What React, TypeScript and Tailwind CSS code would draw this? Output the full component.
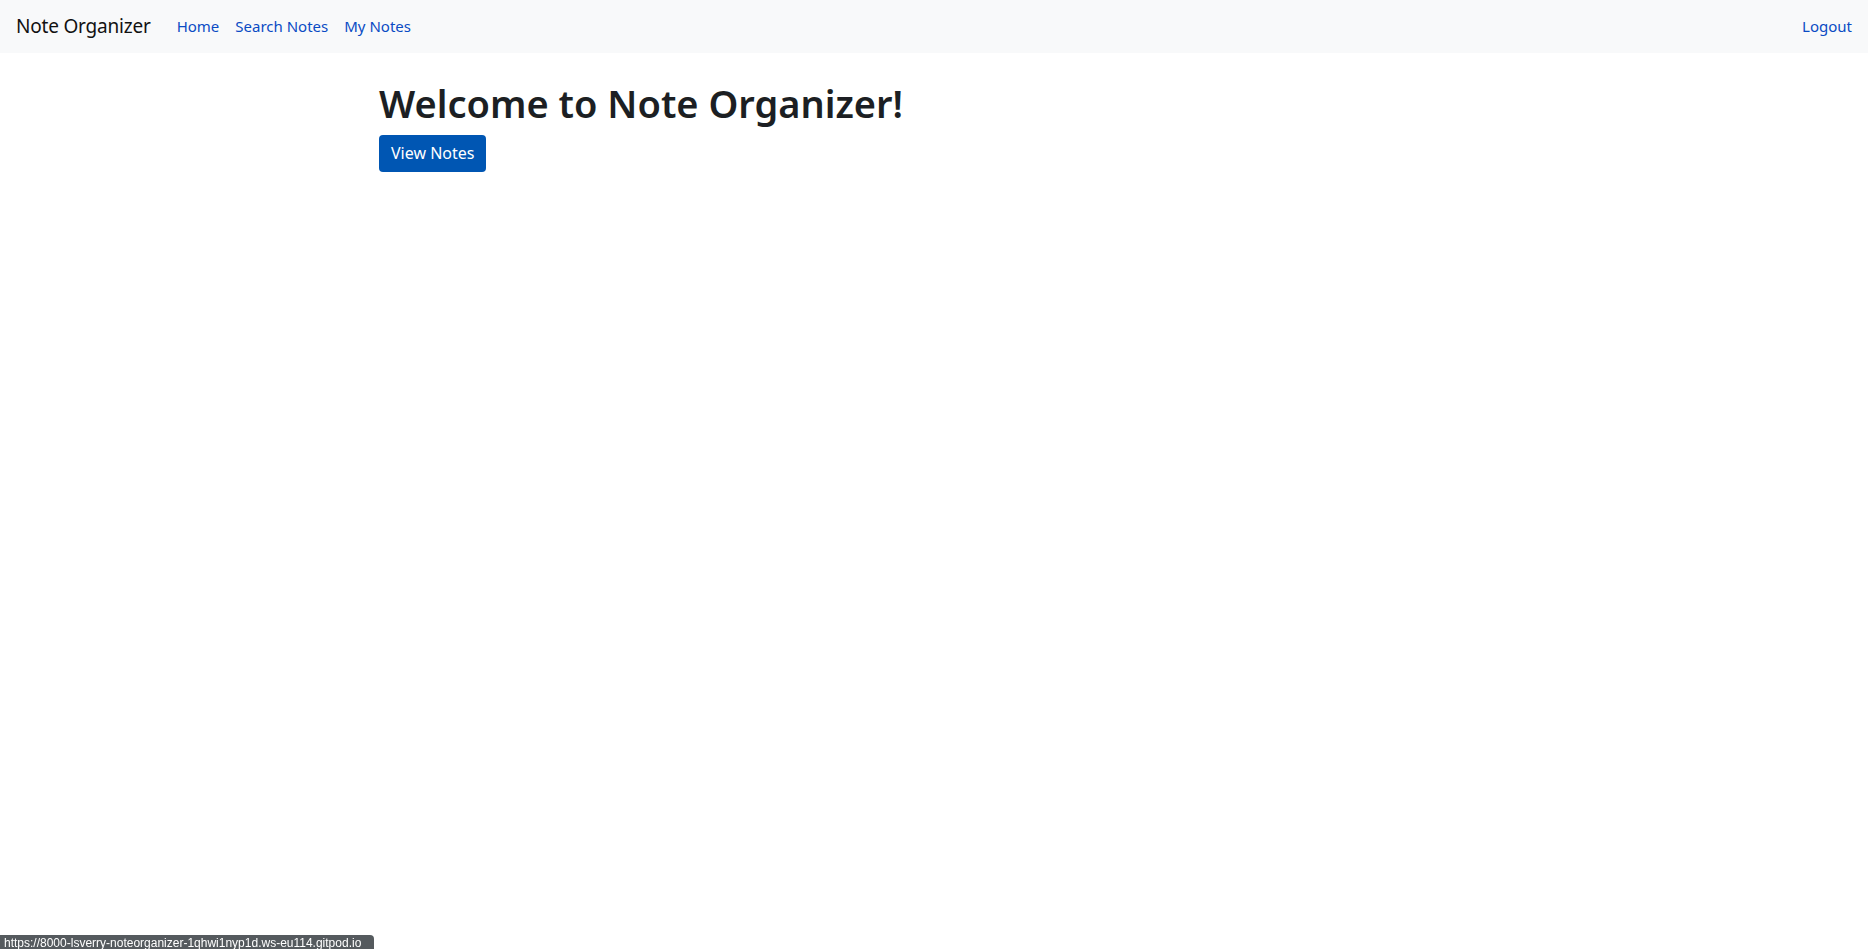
export default function App() {
  return (
    <div className="min-h-[949px] bg-white text-[#212529] font-['Noto_Sans',sans-serif]">
      <nav className="h-[53px] bg-[#f8f9fa] flex items-center px-4">
        <a className="text-[19px] text-[#111] mr-[18px] tracking-[-0.2px]">Note Organizer</a>
        <ul className="flex items-center text-[15px] text-[#0a4bc4]">
          <li className="px-2">Home</li>
          <li className="px-2">Search Notes</li>
          <li className="px-2">My Notes</li>
        </ul>
        <a className="ml-auto text-[15px] text-[#0a4bc4]">Logout</a>
      </nav>
      <main className="w-[1140px] mx-auto px-[15px]">
        <h1 className="text-[38px] font-semibold leading-[1.2] mt-[28px] mb-[8px] text-[#1c1f23]">
          Welcome to Note Organizer!
        </h1>
        <button className="h-[37px] px-3 rounded-[4px] bg-[#0056b3] text-white text-[16px]">
          View Notes
        </button>
      </main>
      <div className="fixed left-0 bottom-0 h-[14px] w-[374px] bg-[#555a5e] rounded-tr-[4px] text-[12px] leading-[16px] text-white pl-1 pr-1 whitespace-nowrap font-['Liberation_Sans',sans-serif]">
        https://8000-lsverry-noteorganizer-1qhwi1nyp1d.ws-eu114.gitpod.io
      </div>
    </div>
  );
}
